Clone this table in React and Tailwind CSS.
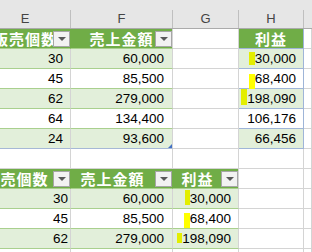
import React from "react";

const num = { fontFamily: '"Liberation Sans", Arial, sans-serif' };
const jp = { fontFamily: '"Noto Sans CJK JP", "Noto Sans", sans-serif' };

const Dropdown = () => (
  <div className="absolute right-0 top-[2px] w-[17px] h-[16px] bg-[#f2f2f2] border border-[#a6a6a6] flex items-center justify-center">
    <div className="w-0 h-0 border-l-[4px] border-r-[4px] border-t-[4px] border-l-transparent border-r-transparent border-t-[#595959]" />
  </div>
);

const Bar = ({ w, h, mt, green }) => (
  <div
    className={`shrink-0 self-start ${green ? "bg-[#e3ee00]" : "bg-[#ffff00]"}`}
    style={{ width: w, height: h, marginTop: mt }}
  />
);

const Num = ({ children, pr = "pr-[7px]" }) => (
  <div className={`flex-1 flex items-center justify-end ${pr} text-[13.5px] text-black leading-none`} style={num}>
    {children}
  </div>
);

const HeadText = ({ children }) => (
  <span className="text-white font-bold text-[15px] tracking-[1px] leading-none whitespace-nowrap" style={jp}>
    {children}
  </span>
);

const t1 = [
  ["30", "60,000", "30,000", { w: 6, h: 13, mt: 3 }],
  ["45", "85,500", "68,400", { w: 6, h: 15, mt: 5 }],
  ["62", "279,000", "198,090", { w: 6, h: 16, mt: 0 }],
  ["64", "134,400", "106,176", null],
  ["24", "93,600", "66,456", null],
];

const t2 = [
  ["30", "60,000", "30,000", { w: 5, h: 15, mt: 1 }],
  ["45", "85,500", "68,400", { w: 6, h: 15, mt: 4 }],
  ["62", "279,000", "198,090", { w: 5, h: 10, mt: 4 }],
  ["64", "134,400", "106,176", null],
];

const grid = "border-r border-b border-[#d4d4d4]";

export default function App() {
  return (
    <div className="w-[312px] h-[252px] overflow-hidden bg-white">
      {/* column letters */}
      <div className="flex h-[29px] bg-[#e6e6e6] border-b border-[#ababab] text-[13px] text-[#444]" style={num}>
        {[
          ["E", "w-[71px]", "-ml-[20px] w-[90px]"],
          ["F", "w-[102px]", "w-full"],
          ["G", "w-[66px]", "w-full"],
          ["H", "w-[65px]", "w-full"],
        ].map(([l, w, inner]) => (
          <div key={l} className={`${w} shrink-0 flex flex-col overflow-hidden`}>
            <div className="mt-[10px] flex-1 border-r border-[#bfbfbf] flex">
              <div className={`${inner} shrink-0 flex items-center justify-center -mt-[1px]`}>{l}</div>
            </div>
          </div>
        ))}
        <div className="flex-1" />
      </div>

      {/* table 1 header */}
      <div className="flex h-[20px]">
        <div className="relative w-[71px] shrink-0 bg-[#70ad47] border-r border-b border-r-[#70ad47] border-b-[#a9d08e] flex overflow-hidden">
          <div className="-ml-[20px] w-[90px] shrink-0 flex items-center justify-center">
            <HeadText>販売個数</HeadText>
          </div>
          <Dropdown />
        </div>
        <div className="relative w-[102px] shrink-0 bg-[#70ad47] border-r border-b border-r-[#d4d4d4] border-b-[#a9d08e] flex items-center justify-center">
          <HeadText>売上金額</HeadText>
          <Dropdown />
        </div>
        <div className={`w-[66px] shrink-0 ${grid}`} />
        <div className="w-[65px] shrink-0 bg-[#70ad47] border-r border-b border-r-[#9fb5d8] border-b-[#9fb5d8] flex items-center justify-center">
          <HeadText>利益</HeadText>
        </div>
        <div className={`flex-1 ${grid}`} />
      </div>

      {/* table 1 rows */}
      {t1.map(([e, f, h, bar], i) => {
        const g = i % 2 === 0;
        const bg = g ? "bg-[#e2efda]" : "bg-white";
        const bb = i === t1.length - 1 ? "border-b-[#a6b8d6]" : "border-b-[#a9d08e]";
        return (
          <div key={i} className="flex h-[20px]">
            <div className={`w-[71px] shrink-0 flex ${bg} border-r border-b border-r-[#d4d4d4] ${bb}`}>
              <Num>{e}</Num>
            </div>
            <div className={`relative w-[102px] shrink-0 flex ${bg} border-r border-b border-r-[#d4d4d4] ${bb}`}>
              <Num pr="pr-[8px]">{f}</Num>
              {i === t1.length - 1 && (
                <div className="absolute right-0 bottom-0 w-0 h-0 border-l-[4px] border-t-[4px] border-l-transparent border-t-transparent border-r-[0px] border-b-[4px] border-b-[#4472c4]" />
              )}
            </div>
            <div className={`w-[66px] shrink-0 ${grid}`} />
            <div className={`w-[65px] shrink-0 flex ${bg} border-r border-b border-r-[#9fb5d8] border-b-[#9fb5d8]`}>
              <div className="flex-1 flex items-stretch justify-end pr-[7px]">
                {bar && <Bar {...bar} green={g} />}
                <div className="flex items-center text-[13.5px] text-black leading-none" style={num}>
                  {h}
                </div>
              </div>
            </div>
            <div className={`flex-1 ${grid}`} />
          </div>
        );
      })}

      {/* blank row */}
      <div className="flex h-[20px]">
        <div className={`w-[71px] shrink-0 ${grid}`} />
        <div className={`w-[102px] shrink-0 ${grid}`} />
        <div className={`w-[66px] shrink-0 ${grid}`} />
        <div className={`w-[65px] shrink-0 ${grid}`} />
        <div className={`flex-1 ${grid}`} />
      </div>

      {/* table 2 header */}
      <div className="flex h-[20px]">
        <div className="relative w-[71px] shrink-0 bg-[#70ad47] border-r border-b border-r-[#70ad47] border-b-[#a9d08e] flex overflow-hidden">
          <div className="-ml-[20px] w-[73px] shrink-0 flex items-center justify-center">
            <HeadText>販売個数</HeadText>
          </div>
          <Dropdown />
        </div>
        <div className="relative w-[102px] shrink-0 bg-[#70ad47] border-r border-b border-r-[#70ad47] border-b-[#a9d08e] flex items-center justify-center pr-[18px]">
          <HeadText>売上金額</HeadText>
          <Dropdown />
        </div>
        <div className="relative w-[66px] shrink-0 bg-[#70ad47] border-r border-b border-r-[#d4d4d4] border-b-[#a9d08e] flex items-center justify-center pr-[16px]">
          <HeadText>利益</HeadText>
          <Dropdown />
        </div>
        <div className={`w-[65px] shrink-0 ${grid}`} />
        <div className={`flex-1 ${grid}`} />
      </div>

      {/* table 2 rows */}
      {t2.map(([e, f, h, bar], i) => {
        const g = i % 2 === 0;
        const bg = g ? "bg-[#e2efda]" : "bg-white";
        return (
          <div key={i} className="flex h-[20px]">
            <div className={`w-[71px] shrink-0 flex ${bg} border-r border-b border-r-[#d4d4d4] border-b-[#a9d08e]`}>
              <Num pr="pr-[2px]">{e}</Num>
            </div>
            <div className={`w-[102px] shrink-0 flex ${bg} border-r border-b border-r-[#d4d4d4] border-b-[#a9d08e]`}>
              <Num pr="pr-[8px]">{f}</Num>
            </div>
            <div className={`w-[66px] shrink-0 flex ${bg} border-r border-b border-r-[#d4d4d4] border-b-[#a9d08e]`}>
              <div className="flex-1 flex items-stretch justify-end pr-[7px]">
                {bar && <Bar {...bar} green={g} />}
                <div className="flex items-center text-[13.5px] text-black leading-none" style={num}>
                  {h}
                </div>
              </div>
            </div>
            <div className={`w-[65px] shrink-0 ${grid}`} />
            <div className={`flex-1 ${grid}`} />
          </div>
        );
      })}
    </div>
  );
}
